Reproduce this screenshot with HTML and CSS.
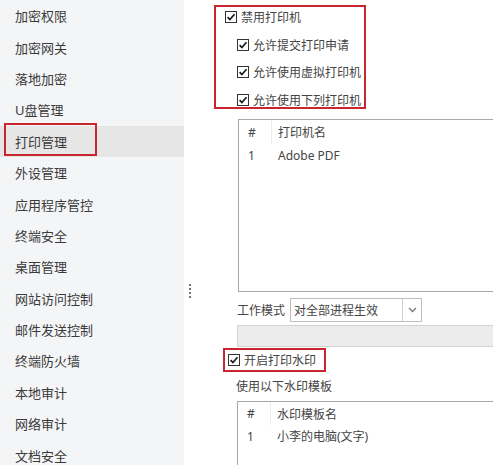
FILE: index.html
```html
<!DOCTYPE html>
<html lang="zh-CN">
<head>
    <meta charset="UTF-8">
    <meta name="viewport" content="width=device-width, initial-scale=1.0">
    <title>打印管理</title>
    <link rel="stylesheet" href="styles.css">
</head>
<body>
    <svg width="0" height="0" class="defs">
        <symbol id="chk" viewBox="0 0 12 12">
            <rect x="0.5" y="0.5" width="11" height="11" fill="#fff" stroke="#333"/>
            <path d="M2.6 6.1 L4.9 8.5 L9.5 3.2" fill="none" stroke="#1a1a1a" stroke-width="1.7"/>
        </symbol>
    </svg>
    <div id="container">
        <div id="sidebar">
            <div class="nav-item">加密权限</div>
            <div class="nav-item">加密网关</div>
            <div class="nav-item">落地加密</div>
            <div class="nav-item">U盘管理</div>
            <div class="nav-item active"><span class="mark">打印管理</span></div>
            <div class="nav-item">外设管理</div>
            <div class="nav-item">应用程序管控</div>
            <div class="nav-item">终端安全</div>
            <div class="nav-item">桌面管理</div>
            <div class="nav-item">网站访问控制</div>
            <div class="nav-item">邮件发送控制</div>
            <div class="nav-item">终端防火墙</div>
            <div class="nav-item">本地审计</div>
            <div class="nav-item">网络审计</div>
            <div class="nav-item">文档安全</div>
        </div>
        <div id="splitter">
            <div class="grip"><i></i><i></i><i></i><i></i></div>
        </div>
        <div id="main">
            <div class="printer-group">
                <label class="check"><svg class="box"><use href="#chk"/></svg>禁用打印机</label>
                <label class="check sub"><svg class="box"><use href="#chk"/></svg>允许提交打印申请</label>
                <label class="check sub"><svg class="box"><use href="#chk"/></svg>允许使用虚拟打印机</label>
                <label class="check sub"><svg class="box"><use href="#chk"/></svg>允许使用下列打印机</label>
            </div>

            <div class="list printers">
                <div class="list-head">
                    <div class="col-num">#</div>
                    <div class="col-name">打印机名</div>
                </div>
                <div class="list-row">
                    <div class="col-num">1</div>
                    <div class="col-name">Adobe PDF</div>
                </div>
            </div>

            <div class="mode-row">
                <span class="mode-label">工作模式</span>
                <div class="select">
                    <span class="select-value">对全部进程生效</span>
                    <span class="select-arrow">
                        <svg width="9" height="6" viewBox="0 0 9 6"><path d="M1 1 L4.5 4.5 L8 1" fill="none" stroke="#777" stroke-width="1.3"/></svg>
                    </span>
                </div>
            </div>
            <div class="status-bar"></div>

            <label class="check watermark-check"><svg class="box"><use href="#chk"/></svg>开启打印水印</label>
            <div class="caption">使用以下水印模板</div>

            <div class="list watermarks">
                <div class="list-head">
                    <div class="col-num">#</div>
                    <div class="col-name">水印模板名</div>
                </div>
                <div class="list-row">
                    <div class="col-num">1</div>
                    <div class="col-name">小李的电脑(文字)</div>
                </div>
            </div>
        </div>
    </div>
</body>
</html>
```

FILE: styles.css
```css
* {
    margin: 0;
    padding: 0;
    box-sizing: border-box;
}

body, html {
    height: 100%;
    overflow: hidden;
    background-color: #fff;
    color: #3a3a3a;
    font-family: "Noto Sans", "Noto Sans CJK SC", sans-serif;
}

.defs {
    position: absolute;
}

#container {
    display: flex;
    height: 100vh;
}

#sidebar {
    width: 184px;
    flex-shrink: 0;
    background-color: #f4f5f7;
}

.nav-item {
    height: 31.4px;
    display: flex;
    align-items: center;
    padding-left: 15px;
    font-size: 13px;
}

.nav-item.active {
    background-color: #e6e6e6;
    position: relative;
}

/* red annotation frame over the selected item */
.nav-item.active .mark::before {
    content: "";
    position: absolute;
    left: 4px;
    top: -3px;
    width: 89px;
    height: 29px;
    border: 2px solid #c9252c;
}

#splitter {
    width: 11px;
    flex-shrink: 0;
    display: flex;
    justify-content: center;
}

.grip {
    margin-top: 284px;
    display: flex;
    flex-direction: column;
    gap: 2px;
}

.grip i {
    display: block;
    width: 2px;
    height: 2px;
    background-color: #777;
}

#main {
    flex-grow: 1;
    display: flex;
    flex-direction: column;
    align-items: flex-start;
    font-size: 12px;
    color: #444;
    min-width: 0;
}

#main > * {
    flex-shrink: 0;
}

.check {
    display: flex;
    align-items: center;
    height: 14px;
    gap: 4px;
    white-space: nowrap;
}

.box {
    width: 12px;
    height: 12px;
    flex-shrink: 0;
}

.printer-group {
    margin-top: 5px;
    margin-left: 19px;
    width: 152px;
    border: 2px solid #c9252c;
    padding: 3px 0 0 9px;
    height: 103.5px;
    display: flex;
    flex-direction: column;
    gap: 13.5px;
}

.check.sub {
    padding-left: 12px;
}

.list {
    margin-left: 43px;
    width: 255px;
    border: 1px solid #a8a8a8;
    border-right: none;
    background-color: #fff;
}

.printers {
    margin-top: 10.5px;
    height: 173px;
}

.list-head, .list-row {
    display: flex;
    align-items: center;
}

.list-head {
    height: 24px;
}

.list-row {
    height: 22px;
}

.col-num {
    width: 33px;
    padding-left: 9px;
    align-self: stretch;
    display: flex;
    align-items: center;
}

.list-head .col-num {
    border-right: 1px solid #ececec;
}

.col-name {
    padding-left: 6px;
}

.mode-row {
    margin-top: 6px;
    margin-left: 42px;
    display: flex;
    align-items: center;
    gap: 5px;
}

.select {
    width: 132px;
    height: 24px;
    border: 1px solid #bdbdbd;
    display: flex;
    align-items: center;
}

.select-value {
    flex-grow: 1;
    padding-left: 3px;
}

.select-arrow {
    width: 19px;
    height: 100%;
    border-left: 1px solid #d0d0d0;
    display: flex;
    align-items: center;
    justify-content: center;
}

.status-bar {
    margin-top: 3px;
    margin-left: 42px;
    width: 256px;
    height: 22px;
    background-color: #ececec;
    border: 1px solid #d3d3d3;
    border-right: none;
}

.watermark-check {
    margin-top: 1px;
    margin-left: 28px;
    height: 24px;
    padding: 0 8px 0 3px;
    border: 2px solid #c9252c;
}

.caption {
    margin-top: 8px;
    margin-left: 41px;
    height: 14px;
    line-height: 14px;
}

.watermarks {
    margin-top: 7px;
    margin-left: 42px;
    width: 256px;
    height: 80px;
}

.watermarks .list-head {
    height: 23px;
}
```
